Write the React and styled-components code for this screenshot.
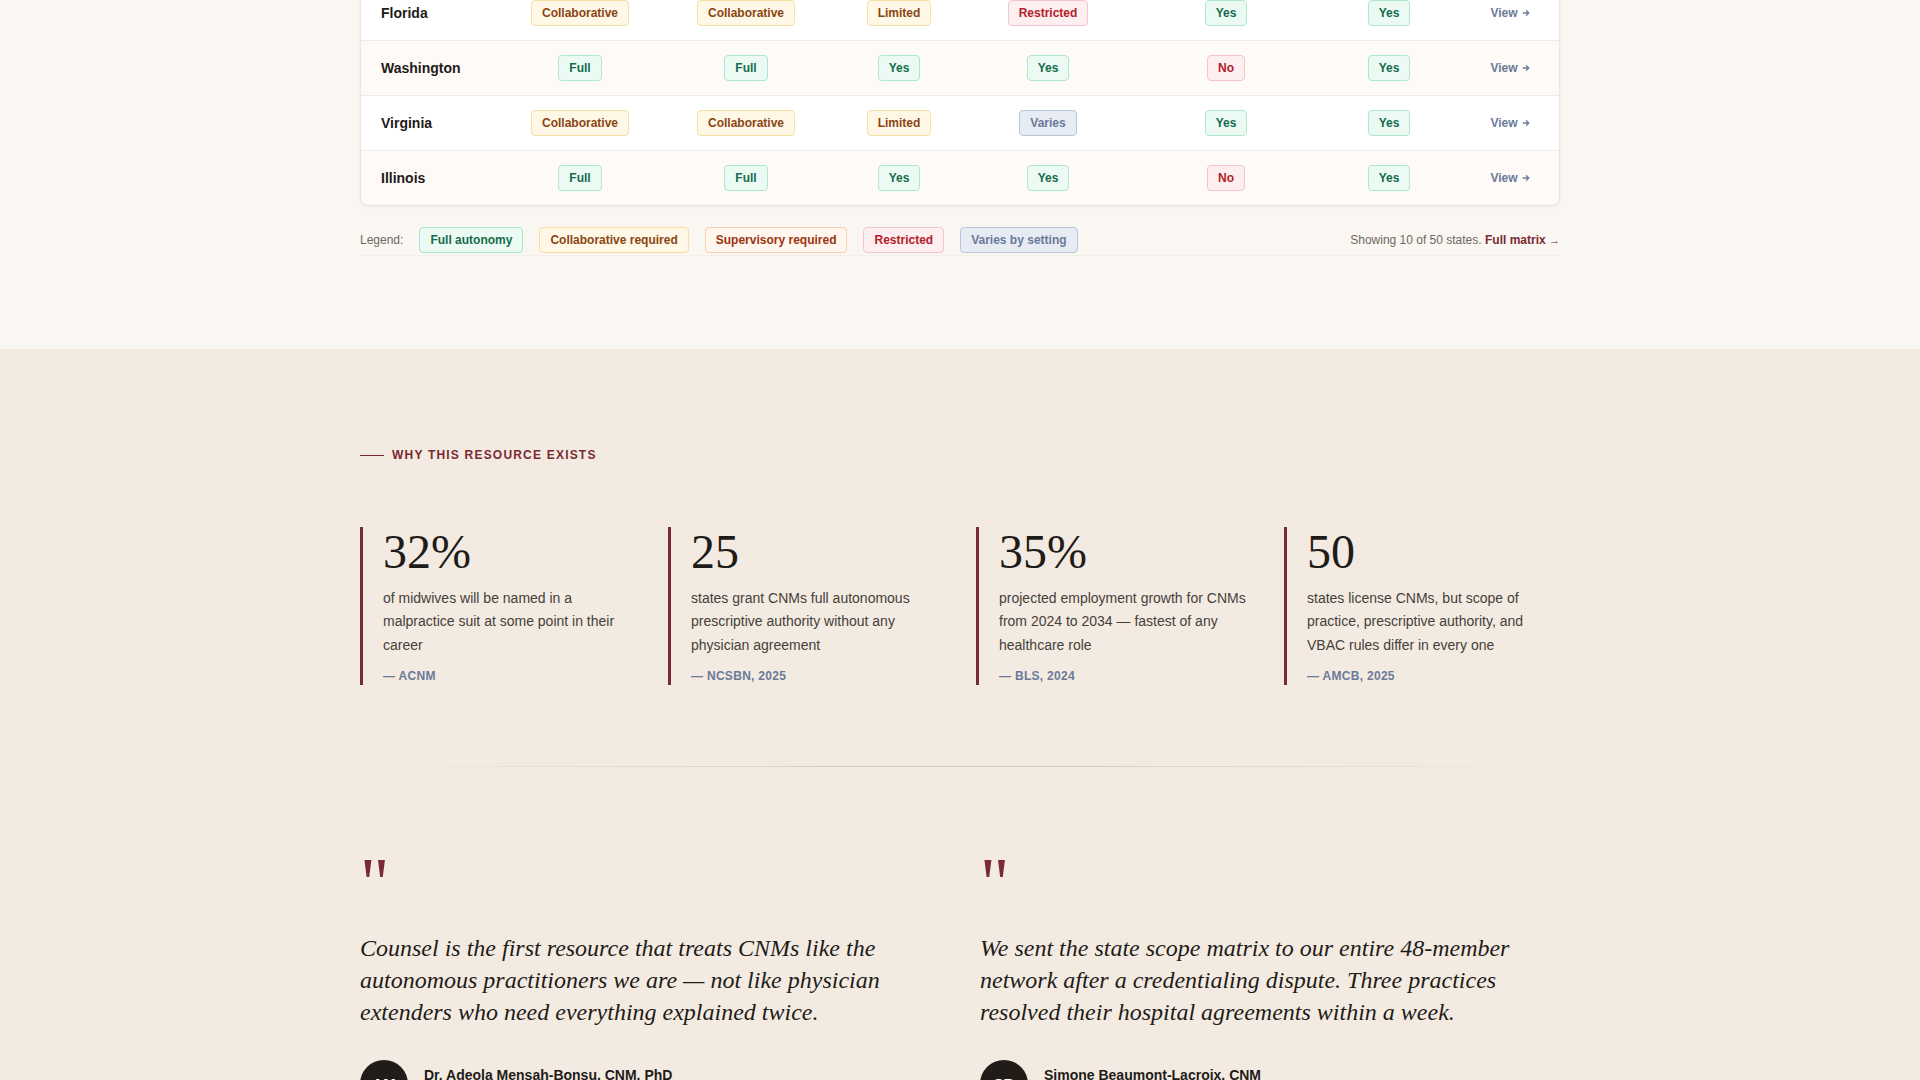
import React from "react";
import styled, { createGlobalStyle, css } from "styled-components";

const Global = createGlobalStyle`
  html, body { margin: 0; padding: 0; }
  body {
    font-family: "Liberation Sans", Arial, sans-serif;
    background: #f3ebe1;
    color: #1f1b18;
    -webkit-font-smoothing: antialiased;
  }
  * { box-sizing: border-box; }
`;

const TopSection = styled.section`
  background: #faf6f1;
  padding: 0 0 93px;
`;

const Container = styled.div`
  width: 1200px;
  margin: 0 auto;
`;

const TableCard = styled.div`
  margin-top: -16px;
  background: #fff;
  border: 1px solid #ebe5dd;
  border-radius: 0 0 8px 8px;
  box-shadow: 0 1px 3px rgba(60, 40, 20, 0.06);
  overflow: hidden;
`;

const Row = styled.div`
  display: grid;
  grid-template-columns: 139px 160px 172px 134px 164px 192px 134px 1fr;
  align-items: center;
  height: 55px;
  background: ${(p) => (p.$alt ? "#fdfaf7" : "#ffffff")};
  border-top: ${(p) => (p.$first ? "none" : "1px solid #efeae3")};
`;

const StateName = styled.div`
  padding-left: 20px;
  font-size: 14px;
  font-weight: 700;
  color: #1f1b18;
`;

const Cell = styled.div`
  display: flex;
  justify-content: center;
`;

const tones = {
  green: css`
    background: #ebfbf4;
    border-color: #ade7cf;
    color: #176b4c;
  `,
  yellow: css`
    background: #fff8e6;
    border-color: #f6df9d;
    color: #8a4514;
  `,
  orange: css`
    background: #fff6ee;
    border-color: #f5d2b1;
    color: #9a3412;
  `,
  red: css`
    background: #fdeef0;
    border-color: #f5c5cb;
    color: #b3212a;
  `,
  slate: css`
    background: #e6ebf4;
    border-color: #bcc5d7;
    color: #6b7a99;
  `,
};

const Pill = styled.span`
  display: inline-block;
  padding: 5px 10px;
  border: 1px solid;
  border-radius: 4px;
  font-size: 12px;
  line-height: 14px;
  font-weight: 700;
  white-space: nowrap;
  ${(p) => tones[p.$tone]}
`;

const ViewLink = styled.a`
  display: flex;
  justify-content: center;
  align-items: center;
  gap: 4px;
  font-size: 12px;
  font-weight: 700;
  color: #6b7a99;
  text-decoration: none;
  padding-left: 5px;
`;

const LegendBar = styled.div`
  display: flex;
  align-items: center;
  justify-content: space-between;
  margin-top: 21px;
  padding-bottom: 2px;
  border-bottom: 1px solid #f3eee7;
`;

const LegendList = styled.div`
  display: flex;
  align-items: center;
  gap: 16px;
`;

const LegendLabel = styled.span`
  font-size: 12px;
  color: #6e6862;
`;

const Showing = styled.div`
  font-size: 12px;
  color: #6e6862;
  strong {
    color: #7a2a33;
    font-weight: 700;
  }
  span {
    color: #7a2a33;
    font-size: 11px;
  }
`;

const WhySection = styled.section`
  background: #f3ebe1;
  padding: 99px 0 0;
`;

const Eyebrow = styled.div`
  display: flex;
  align-items: center;
  gap: 8px;
  font-size: 12px;
  font-weight: 700;
  letter-spacing: 0.1em;
  color: #7a2a33;
  &::before {
    content: "";
    width: 24px;
    height: 1px;
    background: #7a2a33;
  }
`;

const StatGrid = styled.div`
  display: grid;
  grid-template-columns: repeat(4, 1fr);
  gap: 32px;
  margin-top: 65px;
`;

const Stat = styled.div`
  border-left: 3px solid #7a2a33;
  padding: 0 4px 2px 20px;
`;

const StatNumber = styled.div`
  font-family: "Liberation Serif", "Times New Roman", serif;
  font-size: 48px;
  line-height: 1;
  color: #1f1b18;
  margin-top: 1px;
`;

const StatText = styled.p`
  margin: 11px 0 0;
  font-size: 14px;
  line-height: 23.3px;
  color: #45403b;
`;

const StatSource = styled.div`
  margin-top: 12px;
  font-size: 12px;
  font-weight: 700;
  letter-spacing: 0.3px;
  color: #6b7a99;
`;

const Divider = styled.hr`
  margin: 81px 0 0;
  border: none;
  height: 1px;
  background: linear-gradient(
    90deg,
    rgba(210, 198, 184, 0) 0%,
    rgba(210, 198, 184, 1) 50%,
    rgba(210, 198, 184, 0) 100%
  );
`;

const QuoteGrid = styled.div`
  display: grid;
  grid-template-columns: 1fr 1fr;
  gap: 40px;
  margin-top: 80px;
`;

const Quote = styled.figure`
  margin: 0;
`;

const QuoteMark = styled.div`
  font-family: "Liberation Serif", "Times New Roman", serif;
  font-size: 72px;
  line-height: 1;
  height: 56px;
  color: #7a2a33;
`;

const QuoteText = styled.blockquote`
  margin: 29px 0 0;
  font-family: "Liberation Serif", "Times New Roman", serif;
  font-style: italic;
  font-size: 24px;
  line-height: 32px;
  color: #1f1b18;
`;

const Author = styled.figcaption`
  display: flex;
  align-items: center;
  gap: 16px;
  margin-top: 32px;
`;

const Avatar = styled.div`
  width: 48px;
  height: 48px;
  border-radius: 50%;
  background: #221c19;
  color: #fff;
  display: flex;
  align-items: center;
  justify-content: center;
  font-size: 15px;
  font-weight: 700;
  flex-shrink: 0;
`;

const AuthorName = styled.div`
  font-size: 14px;
  font-weight: 700;
  color: #1f1b18;
  line-height: 20px;
`;

const AuthorRole = styled.div`
  font-size: 12px;
  color: #6e6862;
  line-height: 18px;
`;

const toneFor = (v) => {
  if (v === "Full" || v === "Yes") return "green";
  if (v === "Collaborative" || v === "Limited") return "yellow";
  if (v === "Restricted" || v === "No") return "red";
  if (v === "Varies") return "slate";
  return "orange";
};

const rows = [
  ["Florida", "Collaborative", "Collaborative", "Limited", "Restricted", "Yes", "Yes"],
  ["Washington", "Full", "Full", "Yes", "Yes", "No", "Yes"],
  ["Virginia", "Collaborative", "Collaborative", "Limited", "Varies", "Yes", "Yes"],
  ["Illinois", "Full", "Full", "Yes", "Yes", "No", "Yes"],
];

const legend = [
  ["Full autonomy", "green"],
  ["Collaborative required", "yellow"],
  ["Supervisory required", "orange"],
  ["Restricted", "red"],
  ["Varies by setting", "slate"],
];

const stats = [
  ["32%", "of midwives will be named in a malpractice suit at some point in their career", "— ACNM"],
  ["25", "states grant CNMs full autonomous prescriptive authority without any physician agreement", "— NCSBN, 2025"],
  ["35%", "projected employment growth for CNMs from 2024 to 2034 — fastest of any healthcare role", "— BLS, 2024"],
  ["50", "states license CNMs, but scope of practice, prescriptive authority, and VBAC rules differ in every one", "— AMCB, 2025"],
];

const quotes = [
  {
    text: "Counsel is the first resource that treats CNMs like the autonomous practitioners we are — not like physician extenders who need everything explained twice.",
    initials: "AM",
    name: "Dr. Adeola Mensah-Bonsu, CNM, PhD",
    role: "Director of Midwifery Services",
  },
  {
    text: "We sent the state scope matrix to our entire 48-member network after a credentialing dispute. Three practices resolved their hospital agreements within a week.",
    initials: "SB",
    name: "Simone Beaumont-Lacroix, CNM",
    role: "Founder, Midwifery Collective",
  },
];

const Arrow = () => (
  <svg width="8" height="8" viewBox="0 0 10 10" fill="none" stroke="currentColor" strokeWidth="1.6" strokeLinecap="round" strokeLinejoin="round">
    <path d="M1.5 5h7M5.5 2l3 3-3 3" />
  </svg>
);

export default function App() {
  return (
    <>
      <Global />
      <TopSection>
        <Container>
          <TableCard>
            {rows.map((r, i) => (
              <Row key={r[0]} $alt={i % 2 === 1} $first={i === 0}>
                <StateName>{r[0]}</StateName>
                {r.slice(1).map((v, j) => (
                  <Cell key={j}>
                    <Pill $tone={toneFor(v)}>{v}</Pill>
                  </Cell>
                ))}
                <ViewLink href="#">
                  View <Arrow />
                </ViewLink>
              </Row>
            ))}
          </TableCard>
          <LegendBar>
            <LegendList>
              <LegendLabel>Legend:</LegendLabel>
              {legend.map(([t, tone]) => (
                <Pill key={t} $tone={tone}>{t}</Pill>
              ))}
            </LegendList>
            <Showing>
              Showing 10 of 50 states. <strong>Full matrix</strong> <span>→</span>
            </Showing>
          </LegendBar>
        </Container>
      </TopSection>
      <WhySection>
        <Container>
          <Eyebrow>WHY THIS RESOURCE EXISTS</Eyebrow>
          <StatGrid>
            {stats.map(([n, t, s]) => (
              <Stat key={n}>
                <StatNumber>{n}</StatNumber>
                <StatText>{t}</StatText>
                <StatSource>{s}</StatSource>
              </Stat>
            ))}
          </StatGrid>
          <Divider />
          <QuoteGrid>
            {quotes.map((q) => (
              <Quote key={q.name}>
                <QuoteMark>"</QuoteMark>
                <QuoteText>{q.text}</QuoteText>
                <Author>
                  <Avatar>{q.initials}</Avatar>
                  <div>
                    <AuthorName>{q.name}</AuthorName>
                    <AuthorRole>{q.role}</AuthorRole>
                  </div>
                </Author>
              </Quote>
            ))}
          </QuoteGrid>
        </Container>
      </WhySection>
    </>
  );
}
